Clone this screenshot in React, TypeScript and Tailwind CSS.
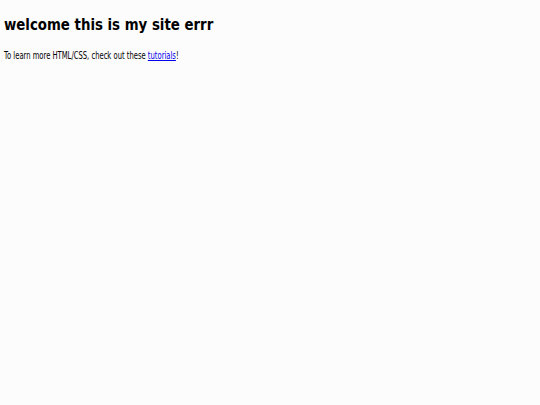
export default function App() {
  return (
    <div className="flex min-h-[405px] w-full flex-col gap-[15px] bg-[#fcfcfc] px-[4px] pt-[15px] font-['DejaVu_Sans',sans-serif] text-black">
      <h1 className="origin-left [transform:scaleX(0.833)] text-[16px] leading-[20px] font-bold whitespace-nowrap">
        welcome this is my site errr
      </h1>
      <p className="origin-left [transform:scaleX(0.68)] text-[10px] leading-[12px] whitespace-nowrap">
        To learn more HTML/CSS, check out these{" "}
        <a href="#" className="text-[#0000ee] underline">tutorials</a>!
      </p>
    </div>
  );
}
